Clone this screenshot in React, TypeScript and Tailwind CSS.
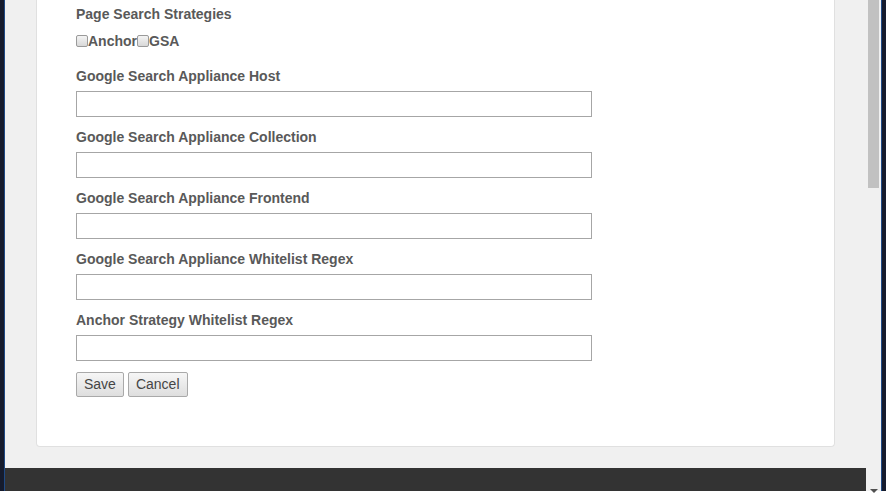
const fields = [
  'Google Search Appliance Host',
  'Google Search Appliance Collection',
  'Google Search Appliance Frontend',
  'Google Search Appliance Whitelist Regex',
  'Anchor Strategy Whitelist Regex',
];

function Checkbox() {
  return (
    <span className="inline-block w-[12px] h-[12px] rounded-[2px] border border-[#9a9a9a] bg-gradient-to-b from-[#f4f4f4] to-[#d8d8d8]" />
  );
}

function Button({ label }: { label: string }) {
  return (
    <button
      type="button"
      className="h-[25px] px-[7px] rounded-[2px] border border-[#a9a9a9] bg-gradient-to-b from-[#f6f6f6] to-[#dedede] text-[14px] leading-[23px] text-[#454545]"
    >
      {label}
    </button>
  );
}

export default function App() {
  return (
    <div className="w-[886px] h-[504px] flex flex-col bg-white overflow-hidden font-['Liberation_Sans',Arial,sans-serif]">
      <div className="h-[491px] flex">
        <div className="w-[4px] bg-[#151b2d]" />
        <div className="w-[1px] bg-[#1f4a86]" />

        <div className="flex-1 flex flex-col bg-[#f0f0f0]">
          <div className="ml-[31px] w-[799px] h-[447px] bg-white border border-t-0 border-[#e0e0e0] rounded-b-[4px] pt-[4px] px-[39px]">
            <div className="text-[14px] leading-[20px] font-bold text-[#595959]">
              Page Search Strategies
            </div>
            <div className="mt-[7px] h-[20px] flex items-center text-[14px] font-bold text-[#595959]">
              <Checkbox />
              <span>Anchor</span>
              <Checkbox />
              <span>GSA</span>
            </div>
            <div className="mt-[15px] flex flex-col">
              {fields.map((f) => (
                <div key={f} className="mb-[10px]">
                  <div className="text-[14px] leading-[20px] font-bold text-[#595959]">{f}</div>
                  <input
                    type="text"
                    className="mt-[5px] block w-[516px] h-[26px] border border-[#a6a6a6] bg-white outline-none"
                  />
                </div>
              ))}
            </div>
            <div className="mt-[1px] flex gap-[4px]">
              <Button label="Save" />
              <Button label="Cancel" />
            </div>
          </div>
          <div className="mt-[21px] h-[23px] bg-[#333333]" />
        </div>

        <div className="w-[15px] bg-[#f0f0f0] flex flex-col items-center">
          <div className="w-[11px] h-[188px] bg-[#c1c1c1]" />
          <div className="flex-1" />
          <div className="w-0 h-0 border-l-[4px] border-r-[4px] border-t-[4px] border-l-transparent border-r-transparent border-t-[#505050] mb-[-2px]" />
        </div>

        <div className="w-[1px] bg-[#1f4a86]" />
        <div className="w-[4px] bg-[#151b2d]" />
      </div>
    </div>
  );
}
